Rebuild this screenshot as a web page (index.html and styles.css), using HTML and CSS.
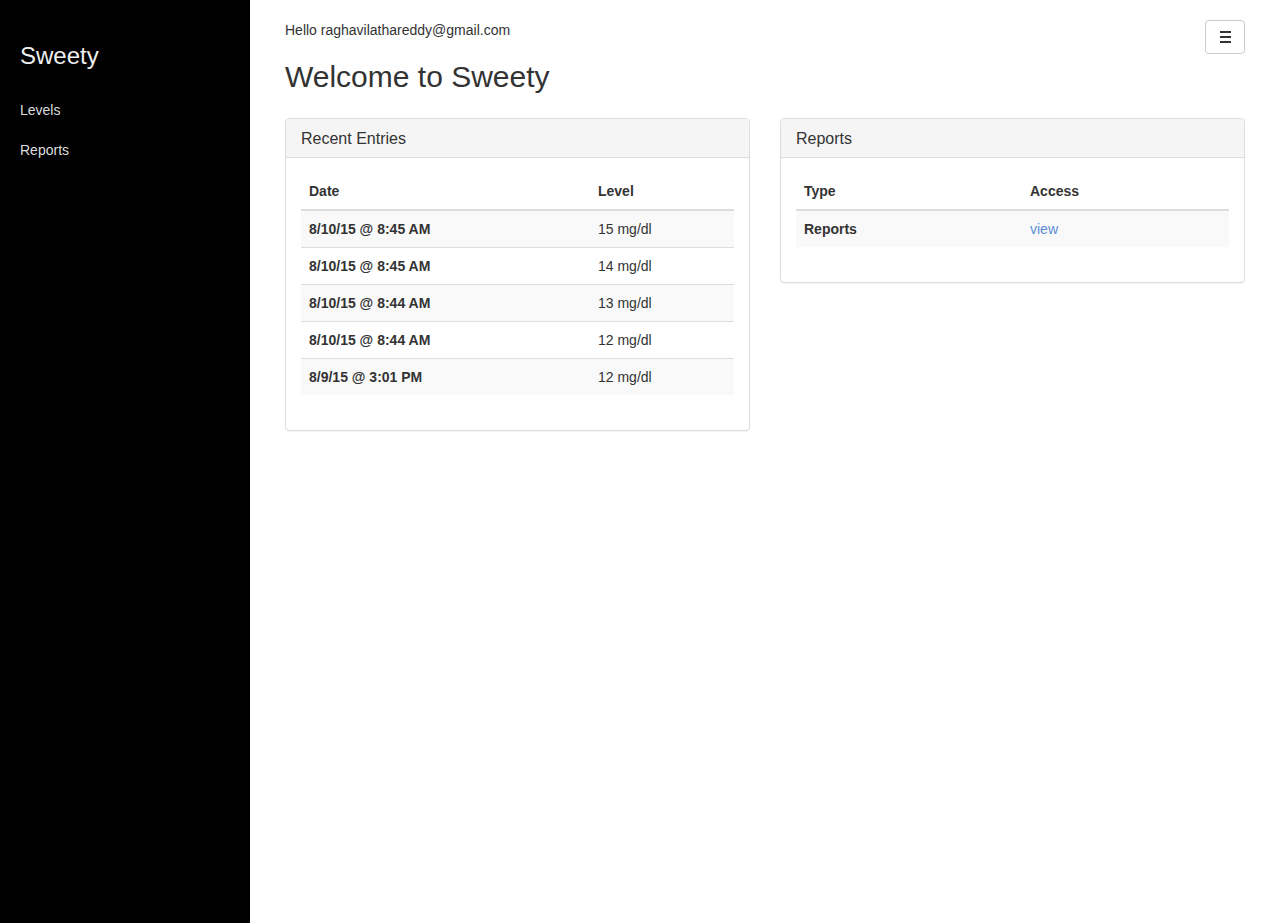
FILE: index.html
```html
<!DOCTYPE html>
<html>
<head>
<meta charset="utf-8">
<title>Sweety</title>
<link rel="stylesheet" href="styles.css">
</head>
<body>
<div class="app">
  <aside class="sidebar">
    <div class="brand">Sweety</div>
    <nav class="nav">
      <a href="#" class="nav-link">Levels</a>
      <a href="#" class="nav-link">Reports</a>
    </nav>
  </aside>
  <main class="main">
    <div class="topbar">
      <div class="intro">
        <p class="hello">Hello raghavilathareddy@gmail.com</p>
        <h2 class="title">Welcome to Sweety</h2>
      </div>
      <button class="toggle" type="button" aria-label="menu">
        <span class="bar"></span><span class="bar"></span><span class="bar"></span>
      </button>
    </div>
    <div class="panels">
      <section class="panel">
        <div class="panel-heading">Recent Entries</div>
        <div class="panel-body">
          <table class="table">
            <thead>
              <tr><th class="col-date">Date</th><th>Level</th></tr>
            </thead>
            <tbody>
              <tr><th>8/10/15 @ 8:45 AM</th><td>15 mg/dl</td></tr>
              <tr><th>8/10/15 @ 8:45 AM</th><td>14 mg/dl</td></tr>
              <tr><th>8/10/15 @ 8:44 AM</th><td>13 mg/dl</td></tr>
              <tr><th>8/10/15 @ 8:44 AM</th><td>12 mg/dl</td></tr>
              <tr><th>8/9/15 @ 3:01 PM</th><td>12 mg/dl</td></tr>
            </tbody>
          </table>
        </div>
      </section>
      <section class="panel panel-short">
        <div class="panel-heading">Reports</div>
        <div class="panel-body">
          <table class="table">
            <thead>
              <tr><th class="col-type">Type</th><th>Access</th></tr>
            </thead>
            <tbody>
              <tr><th>Reports</th><td><a href="#" class="link">view</a></td></tr>
            </tbody>
          </table>
        </div>
      </section>
    </div>
  </main>
</div>
</body>
</html>
```
FILE: styles.css
```css
* { box-sizing: border-box; }
html, body { margin: 0; padding: 0; height: 100%; }
body {
  font-family: "Liberation Sans", Arial, Helvetica, sans-serif;
  font-size: 14px;
  line-height: 1.42857;
  color: #333;
  background: #fff;
}
.app { display: flex; min-height: 100%; }
.sidebar {
  width: 250px;
  flex: 0 0 250px;
  background: #000;
  padding: 42px 20px 0 20px;
}
.brand {
  color: #eee;
  font-size: 24px;
  line-height: 28px;
  margin-bottom: 30px;
}
.nav { display: flex; flex-direction: column; gap: 20px; }
.nav-link {
  color: #ddd;
  text-decoration: none;
  font-size: 14px;
  line-height: 20px;
}
.main {
  flex: 1;
  padding: 20px 35px 0 35px;
}
.topbar {
  display: flex;
  justify-content: space-between;
  align-items: flex-start;
}
.hello { margin: 0; line-height: 20px; }
.title {
  margin: 20px 0 0 0;
  font-size: 30px;
  font-weight: 500;
  line-height: 33px;
  color: #333;
}
.toggle {
  width: 40px;
  height: 34px;
  border: 1px solid #ccc;
  border-radius: 4px;
  background: #fff;
  padding: 0;
  display: flex;
  flex-direction: column;
  align-items: center;
  justify-content: center;
  gap: 3px;
}
.bar { display: block; width: 11px; height: 2px; background: #333; }
.panels {
  display: flex;
  gap: 30px;
  align-items: flex-start;
  margin-top: 25px;
}
.panel {
  flex: 1;
  border: 1px solid #ddd;
  border-radius: 4px;
  background: #fff;
  box-shadow: 0 1px 1px rgba(0,0,0,0.05);
}
.panel-heading {
  background: #f5f5f5;
  border-bottom: 1px solid #ddd;
  border-radius: 3px 3px 0 0;
  padding: 11px 15px 9px 15px;
  font-size: 16px;
  line-height: 18px;
  color: #333;
}
.panel-body { padding: 15px; }
.table {
  width: 100%;
  border-collapse: collapse;
  border-spacing: 0;
  margin-bottom: 20px;
}
.table th, .table td {
  padding: 8px;
  line-height: 20px;
  text-align: left;
  vertical-align: top;
  border-top: 1px solid #ddd;
}
.table th { font-weight: bold; }
.table thead th {
  border-top: 0;
  border-bottom: 2px solid #ddd;
  vertical-align: bottom;
}
.table tbody tr:first-child th, .table tbody tr:first-child td { border-top: 0; }
.table tbody tr:nth-child(odd) { background: #f9f9f9; }
.col-date { width: 289px; }
.col-type { width: 226px; }
.link { color: #5b8fd3; text-decoration: none; }
```
